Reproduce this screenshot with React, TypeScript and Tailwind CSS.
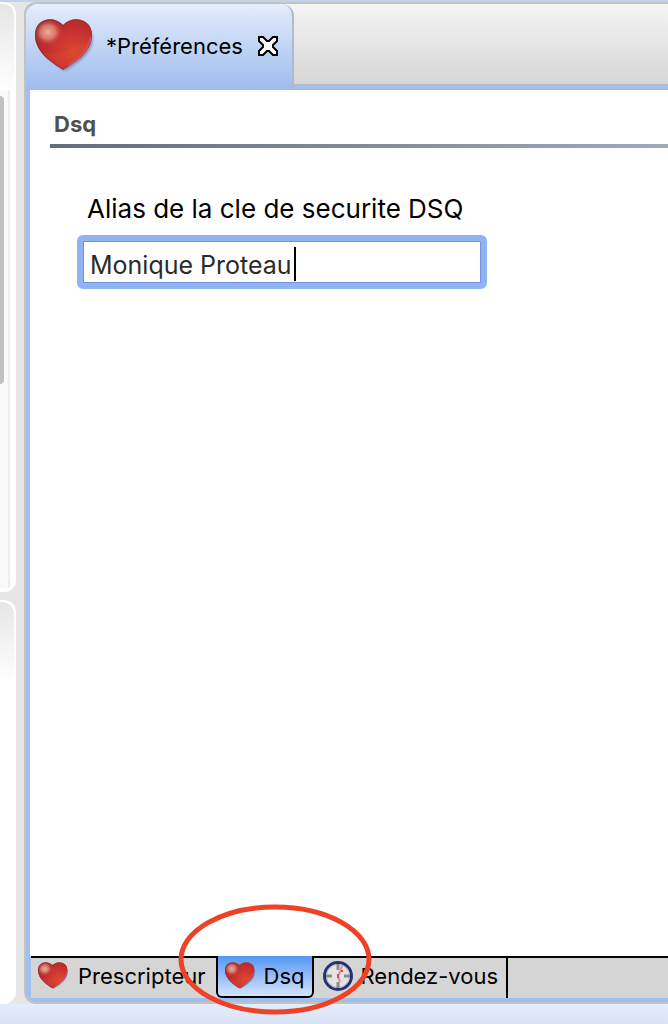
import { useState } from "react";

function HeartIcon({ id, className }: { id: string; className: string }) {
  return (
    <svg viewBox="0 0 60 54" className={className} aria-hidden="true">
      <defs>
        <radialGradient id={`${id}-body`} cx="0.68" cy="0.6" r="0.75">
          <stop offset="0" stopColor="#d9472f" />
          <stop offset="0.45" stopColor="#ca3331" />
          <stop offset="0.8" stopColor="#b52a2e" />
          <stop offset="1" stopColor="#8f2429" />
        </radialGradient>
        <radialGradient id={`${id}-shine`} cx="0.5" cy="0.5" r="0.5">
          <stop offset="0" stopColor="#f3bda8" stopOpacity="0.9" />
          <stop offset="0.5" stopColor="#e79582" stopOpacity="0.7" />
          <stop offset="1" stopColor="#ca3331" stopOpacity="0" />
        </radialGradient>
        <filter id={`${id}-blur`} x="-20%" y="-20%" width="140%" height="140%">
          <feGaussianBlur stdDeviation="1.2" />
        </filter>
        <clipPath id={`${id}-clip`}>
          <path d="M29 51C21 45 1 35 1 16C1 -1 20 -4 29 6C38 -4 58 -1 58 16C58 35 37 45 29 51Z" />
        </clipPath>
      </defs>
      <path
        d="M31 52C24 47 4 37 3 18C3 6 20 1 31 9C43 1 59 6 59 19C59 37 39 47 31 52Z"
        fill="#3b4668"
        opacity="0.4"
        filter={`url(#${id}-blur)`}
      />
      <g clipPath={`url(#${id}-clip)`}>
        <rect width="60" height="54" fill={`url(#${id}-body)`} />
        <path d="M8 33C28 38 45 26 60 18V54H8Z" fill="#e9562f" opacity="0.18" />
        <ellipse cx="14" cy="13" rx="15" ry="14" fill={`url(#${id}-shine)`} />
        <path
          d="M29 51C21 45 1 35 1 16C1 -1 20 -4 29 6C38 -4 58 -1 58 16C58 35 37 45 29 51Z"
          fill="none"
          stroke="#8f2429"
          strokeWidth="2"
          opacity="0.55"
        />
        <path d="M57 18C55 33 42 41 34 47" fill="none" stroke="#dc5580" strokeWidth="2" opacity="0.6" />
      </g>
    </svg>
  );
}

function ClockIcon() {
  return (
    <svg viewBox="0 0 32 32" className="h-8 w-8 shrink-0" aria-hidden="true">
      <circle cx="16" cy="16" r="13.5" fill="#e4e4e5" stroke="#26316f" strokeWidth="3" />
      <circle cx="16" cy="16" r="11.5" fill="none" stroke="#b3b8d0" strokeWidth="1" />
      <path d="M16 4v6M16 22v6M4 16h6M22 16h6" stroke="#8b8b8b" strokeWidth="3" />
      <path d="M20 6L18 12L16 16L18 22" fill="none" stroke="#e88890" strokeWidth="2" />
      <path d="M19 10h2v2h-2zM15 14h2v4h-2z" fill="#dc4a55" />
    </svg>
  );
}

function CloseIcon() {
  return (
    <svg viewBox="0 0 20 20" className="h-5 w-5" aria-hidden="true">
      <path
        d="M1 1H5L9 5H11L15 1H19V5L15 9V11L19 15V19H15L11 15H9L5 19H1V15L5 11V9L1 5Z"
        fill="#fff"
        stroke="#000"
        strokeWidth="2"
      />
    </svg>
  );
}

function SidePanels() {
  return (
    <aside className="flex w-4 shrink-0 flex-col gap-2">
      <div className="flex grow flex-col overflow-hidden rounded-r-xl border-t-2 border-r-2 border-white bg-white">
        <div className="h-[86px] shrink-0 bg-linear-to-b from-[#e6e6e6] to-white" />
        <div className="mr-1 mb-1 grow border-r-2 border-[#eeeeee] bg-[#fafafa] pt-1.5">
          <div className="h-72 w-1 rounded-r bg-[#c1c1c1]" />
        </div>
      </div>
      <div className="h-[404px] shrink-0 rounded-r-xl border-t-2 border-r-2 border-white bg-white">
        <div className="h-20 rounded-tr-xl bg-linear-to-b from-[#e6e6e6] to-white" />
      </div>
    </aside>
  );
}

export default function App() {
  const [alias, setAlias] = useState("Monique Proteau");

  return (
    <div className="flex min-h-screen flex-col overflow-hidden bg-[#e6e6e6] font-['Inter','Liberation_Sans',sans-serif] text-black">
      <div className="h-0.5 shrink-0 bg-[#c0d2ec]" />
      <div className="flex grow">
        <SidePanels />
        <main className="ml-2 flex min-w-0 grow flex-col rounded-l-xl border-y-2 border-l-2 border-[#c2c3bf] bg-[#a0beee]">
          <header className="flex h-[82px] shrink-0 rounded-tl-xl bg-linear-to-b from-[#f5f5f5] to-[#d5d5d5]">
            <div className="-mb-1 flex shrink-0 items-center rounded-tl-xl rounded-tr-xl border-r-2 border-[#b4b9c8] bg-linear-to-b from-[#e4edfa] to-[#9dbcee] pr-3.5 pb-0.5 pl-2">
              <HeartIcon id="editor" className="h-[54px] w-15" />
              <h1 className="pr-[15px] pl-3 text-[22px] leading-8">*Préférences</h1>
              <button type="button" aria-label="Fermer" className="flex">
                <CloseIcon />
              </button>
            </div>
            <div className="grow border-b-2 border-[#b4b9c8]" />
          </header>
          <section className="mt-1 ml-1 flex grow flex-col bg-white">
            <div className="ml-5 pt-4">
              <h2 className="pl-1 text-[22px] leading-9 font-bold text-[#505050]">Dsq</h2>
              <div className="mt-0.5 h-1 bg-linear-to-r from-[#626d82] to-[#a1aab7]" />
            </div>
            <div className="mt-[45px] ml-[47px]">
              <label htmlFor="alias" className="block pl-2.5 text-[26px] leading-8">
                Alias de la cle de securite DSQ
              </label>
              <div className="relative mt-2.5 w-[410px] rounded-md border-[6px] border-[#92b3f3]">
                <input
                  id="alias"
                  type="text"
                  value={alias}
                  onChange={(e) => setAlias(e.target.value)}
                  className="block h-[42px] w-full border border-[#7094dc] bg-white pt-1.5 pl-1.5 text-[25px] text-[#2b2b2b] caret-transparent outline-none"
                />
                <span className="absolute top-1.5 left-[211px] h-[34px] w-0.5 bg-black" />
              </div>
            </div>
          </section>
          <nav className="relative mb-1 ml-[5px] flex h-[42px] shrink-0 text-[22px] leading-8">
            <button type="button" className="flex shrink-0 items-center border-t-2 border-black bg-[#d5d5d5] pr-2.5 pb-1 pl-1.5">
              <HeartIcon id="prescripteur" className="mr-[9px] h-7 w-8" />
              Prescripteur
            </button>
            <div className="relative shrink-0 bg-[#d5d5d5]">
              <button
                type="button"
                aria-current="page"
                className="flex h-full items-center rounded-b-md border-x-2 border-b-2 border-black bg-linear-to-b from-[#5396f3] to-[#d5e3f9] pr-2 pl-1.5"
              >
                <HeartIcon id="dsq" className="mr-2 h-7 w-8" />
                Dsq
              </button>
              <svg
                viewBox="0 0 194 112"
                className="pointer-events-none absolute -top-[53px] -left-[38px] z-10 h-28 w-[194px] max-w-none"
                aria-hidden="true"
              >
                <ellipse cx="97" cy="56.5" rx="94" ry="52.5" fill="none" stroke="#ee4226" strokeWidth="5" />
              </svg>
            </div>
            <button type="button" className="flex shrink-0 items-center border-t-2 border-r-2 border-black bg-[#d5d5d5] pr-2 pb-1 pl-2">
              <ClockIcon />
              <span className="pl-1.5">Rendez-vous</span>
            </button>
            <div className="grow border-t-2 border-black bg-[#d5d5d5]" />
          </nav>
        </main>
      </div>
      <footer className="h-5 shrink-0 bg-linear-to-b from-[#e4edfc] to-[#d8e3f5]" />
    </div>
  );
}
